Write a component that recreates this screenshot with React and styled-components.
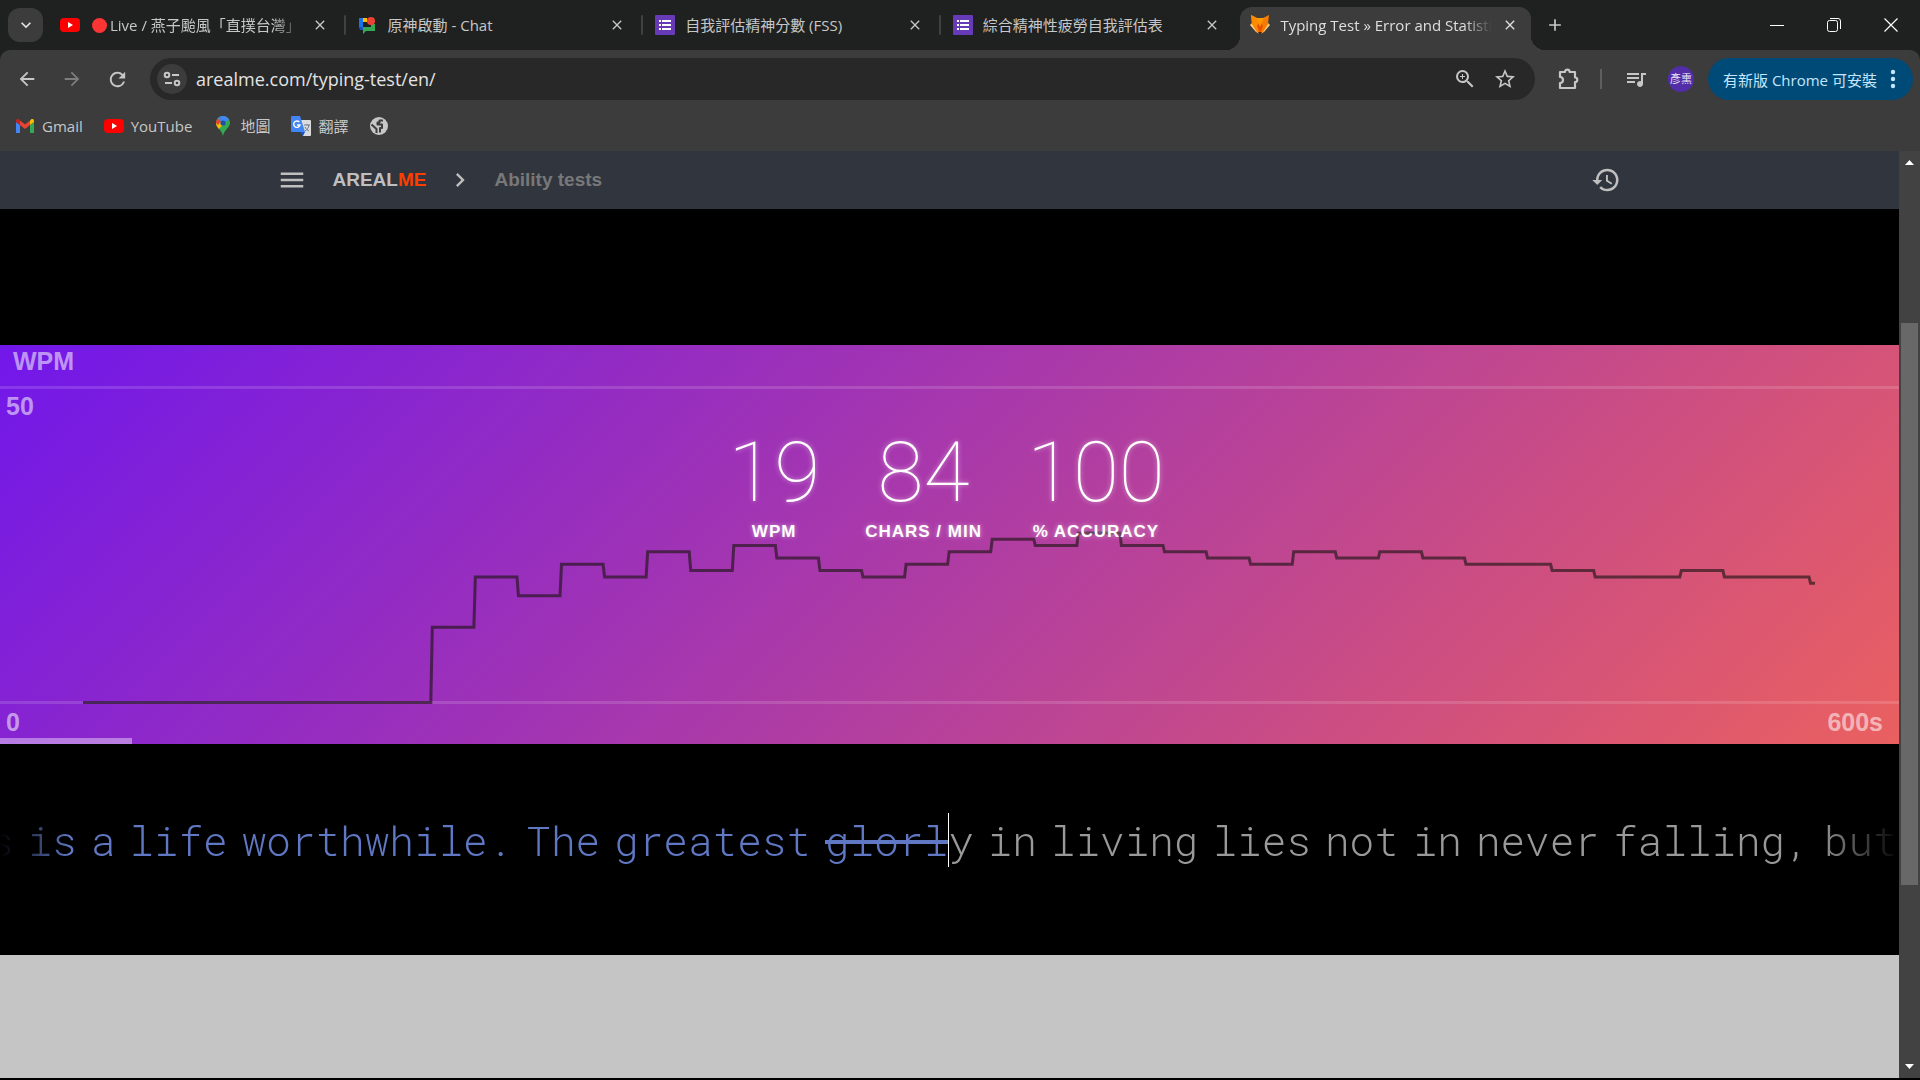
import React from 'react';
import styled, { createGlobalStyle, css } from 'styled-components';
import {
  MdArrowBack,
  MdArrowForward,
  MdRefresh,
  MdOutlineZoomIn,
  MdStarOutline,
  MdOutlineQueueMusic,
  MdHistory,
  MdMenu,
  MdChevronRight,
  MdKeyboardArrowDown,
  MdClose,
  MdAdd,
} from 'react-icons/md';

const UI_FONT = '"Open Sans", "Noto Sans CJK TC", sans-serif';
const SITE_FONT = '"Liberation Sans", Arial, sans-serif';

const GlobalStyle = createGlobalStyle`
  *, *::before, *::after { box-sizing: border-box; }
  body { margin: 0; background: #000; overflow: hidden; }
  button { padding: 0; border: 0; background: none; color: inherit; font: inherit; cursor: pointer; }
  a { color: inherit; text-decoration: none; }
  svg { display: block; flex: none; }
`;

const Window = styled.div`
  display: flex;
  flex-direction: column;
  height: 100vh;
  background: #000;
  font-family: ${UI_FONT};
  padding-bottom: 2px;
`;

/* ---------- Tab strip ---------- */

const TabStrip = styled.header`
  display: flex;
  align-items: center;
  height: 50px;
  flex: none;
  padding: 0 1px 0 8px;
  background: #1f2120;
  color: #c7c7c7;
`;

const TabSearch = styled.button`
  display: grid;
  place-items: center;
  width: 35px;
  height: 34px;
  margin-right: 5px;
  border-radius: 12px;
  background: #3c3c3c;
  color: #e3e3e3;
`;

const TabList = styled.div`
  display: flex;
  flex: 0 1 1488px;
  min-width: 0;
  height: 100%;
`;

const TabSlot = styled.div`
  display: flex;
  align-items: center;
  flex: 1 1 0;
  min-width: 0;
  gap: 3px;
  padding-left: 2px;
`;

const TabDivider = styled.span`
  width: 2px;
  height: 20px;
  border-radius: 1px;
  background: ${({ $hidden }) => ($hidden ? 'transparent' : '#3f4140')};
`;

const TabShape = styled.div`
  position: relative;
  display: flex;
  align-items: center;
  flex: 1;
  min-width: 0;
  align-self: stretch;
  margin-top: 7px;
  padding: 0 13px 7px 10px;
  ${({ $active }) =>
    $active &&
    css`
      background: #3c3c3c;
      color: #dfdfdf;
      border-radius: 12px 12px 0 0;
      &::before,
      &::after {
        content: '';
        position: absolute;
        bottom: 0;
        width: 14px;
        height: 14px;
      }
      &::before {
        right: 100%;
        background: radial-gradient(circle at 0 0, transparent 14px, #3c3c3c 14px);
      }
      &::after {
        left: 100%;
        background: radial-gradient(circle at 100% 0, transparent 14px, #3c3c3c 14px);
      }
    `}
`;

const TabTitle = styled.span`
  display: flex;
  align-items: center;
  gap: 3px;
  flex: 1;
  min-width: 0;
  margin: 0 10px;
  overflow: hidden;
  white-space: nowrap;
  font-size: 15px;
  line-height: 24px;
  font-family: ${({ $latin }) => ($latin ? '"Open Sans", sans-serif' : UI_FONT)};
  ${({ $fade }) => $fade && css`mask-image: linear-gradient(to right, #000 calc(100% - 28px), transparent);`}
`;

const LiveDot = styled.span`
  flex: none;
  width: 15px;
  height: 15px;
  margin-left: 2px;
  border-radius: 50%;
  background: #fb3434;
`;

const NewTab = styled.button`
  margin-left: 9px;
`;

const WindowControls = styled.div`
  display: flex;
  margin-left: auto;
  color: #fff;
`;

const WindowButton = styled.button`
  display: grid;
  place-items: center;
  width: 57px;
  height: 50px;
`;

/* ---------- Toolbar ---------- */

const ToolbarBack = styled.div`
  flex: none;
  background: #1f2120;
`;

const Toolbar = styled.div`
  display: flex;
  align-items: center;
  height: 58px;
  padding: 0 7px 0 15px;
  border-radius: 10px 10px 0 0;
  background: #3c3c3c;
  color: #c7c7c7;
`;

const NavButtons = styled.div`
  display: flex;
  gap: 21px;
  margin-right: 21px;
`;

const IconButton = styled.button`
  display: grid;
  place-items: center;
  width: 24px;
  height: 24px;
  color: ${({ $dim }) => ($dim ? '#7d7d7d' : 'inherit')};
`;

const AddressBar = styled.div`
  display: flex;
  align-items: center;
  flex: 1;
  height: 42px;
  padding: 0 18px 0 7px;
  border-radius: 21px;
  background: #282828;
  gap: 16px;
`;

const SiteInfo = styled.button`
  display: grid;
  place-items: center;
  width: 30px;
  height: 30px;
  margin-right: -7px;
  border-radius: 50%;
  background: #3c3c3c;
`;

const AddressInput = styled.input`
  flex: 1;
  min-width: 0;
  padding: 0;
  border: 0;
  outline: 0;
  background: none;
  color: #e3e3e3;
  font-family: ${UI_FONT};
  font-size: 18px;
`;

const Actions = styled.div`
  display: flex;
  align-items: center;
  margin-left: 21px;
`;

const ActionDivider = styled.span`
  width: 2px;
  height: 20px;
  margin: 0 22px 0 20px;
  background: #5f5f5f;
`;

const Avatar = styled.button`
  display: grid;
  place-items: center;
  width: 26px;
  height: 26px;
  margin: 0 14px 0 20px;
  border-radius: 50%;
  background: #512da8;
  color: #e8e4f4;
  font-size: 11px;
  line-height: 16px;
`;

const UpdateButton = styled.button`
  display: flex;
  align-items: center;
  justify-content: space-between;
  width: 205px;
  height: 42px;
  padding: 0 17px 0 15px;
  border-radius: 21px;
  background: #004a77;
  color: #c2e7ff;
  font-size: 15px;
  white-space: nowrap;
`;

const Bookmarks = styled.nav`
  display: flex;
  align-items: center;
  gap: 21px;
  height: 43px;
  padding: 0 15px 8px;
  background: #3c3c3c;
  color: #c7c7c7;
`;

const Bookmark = styled.a`
  display: flex;
  align-items: center;
  gap: 7px;
  font-size: 15px;
  line-height: 24px;
`;

/* ---------- Page ---------- */

const Viewport = styled.div`
  display: flex;
  flex: 1;
  min-height: 0;
`;

const Page = styled.main`
  display: flex;
  flex-direction: column;
  flex: 1;
  min-width: 0;
  background: #c5c5c5;
  font-family: ${SITE_FONT};
`;

const SiteNav = styled.nav`
  flex: none;
  padding: 0 26px 0 24px;
  background: #31353e;
`;

const SiteNavInner = styled.div`
  display: flex;
  align-items: center;
  max-width: 1344px;
  height: 58px;
  margin: 0 auto;
  color: #bfbfbf;
  font-size: 19px;
  font-weight: 700;
`;

const Brand = styled.a`
  margin: 0 20px 0 26px;
  em {
    font-style: normal;
    color: #ff3d00;
  }
`;

const Crumb = styled.a`
  margin-left: 20px;
  color: #787878;
`;

const HistoryButton = styled.button`
  margin-left: auto;
`;

const Stage = styled.section`
  flex: none;
  padding-top: 136px;
  background: #000;
`;

const ChartPanel = styled.div`
  position: relative;
  height: 399px;
  background: linear-gradient(135deg, #7117ea, #ea6060);
`;

const ChartSvg = styled.svg`
  width: 100%;
  height: 100%;
`;

const AxisLabel = styled.span`
  position: absolute;
  color: rgba(255, 255, 255, 0.55);
  font-size: 25px;
  line-height: 28px;
  font-weight: 700;
  ${({ $at }) =>
    ({
      title: 'left: 13px; top: 2px;',
      max: 'left: 6px; top: 47px;',
      min: 'left: 6px; bottom: 8px;',
      end: 'right: 16px; bottom: 8px;',
    })[$at]}
`;

const Progress = styled.div`
  position: absolute;
  left: 0;
  bottom: 0;
  height: 6px;
  background: rgba(255, 255, 255, 0.4);
`;

const Stats = styled.dl`
  position: absolute;
  inset: 0;
  display: flex;
  justify-content: center;
  gap: 45px;
  margin: 0;
  padding: 81px 6px 0 0;
  color: #fff;
  text-shadow: 0 0 5px rgba(255, 255, 255, 0.5);
`;

const Stat = styled.div`
  display: flex;
  flex-direction: column-reverse;
  justify-content: flex-end;
  align-items: center;
`;

const StatValue = styled.dd`
  margin: 0;
  font-family: Roboto, sans-serif;
  font-size: 84px;
  line-height: 94px;
  font-weight: 100;
`;

const StatLabel = styled.dt`
  font-size: 17px;
  line-height: 24px;
  font-weight: 700;
  letter-spacing: 1px;
`;

const TypingLine = styled.div`
  display: flex;
  align-items: center;
  height: 211px;
  padding: 0 2px 19px 0;
  font-family: "Roboto Mono", "Liberation Mono", monospace;
  font-size: 41px;
  font-weight: 300;
  line-height: 54px;
  white-space: nowrap;
  mask-image: linear-gradient(to right, transparent, #000 70px, #000 calc(100% - 80px), transparent);
`;

const Half = styled.div`
  display: flex;
  flex: 1 1 0;
  min-width: 0;
  gap: 14px;
  overflow: hidden;
  justify-content: ${({ $typed }) => ($typed ? 'flex-end' : 'flex-start')};
  color: ${({ $typed }) => ($typed ? '#6078c4' : '#999')};
`;

const Word = styled.span`
  flex: none;
  ${({ $wrong }) =>
    $wrong &&
    css`
      text-decoration: line-through;
      text-decoration-thickness: 4px;
    `}
`;

const Caret = styled.span`
  width: 1px;
  height: 54px;
  background: #fff;
`;

const Scrollbar = styled.div`
  display: flex;
  flex-direction: column;
  align-items: center;
  width: 21px;
  flex: none;
  background: #424242;
`;

const ScrollArrow = styled.button`
  display: grid;
  place-items: center;
  width: 21px;
  height: 23px;
  color: #fff;
`;

const ScrollTrack = styled.div`
  flex: 1;
  width: 17px;
`;

const ScrollThumb = styled.div`
  width: 17px;
  background: #686868;
`;

/* ---------- Icons ---------- */

const YouTubeIcon = () => (
  <svg width="20" height="20" viewBox="0 0 20 20">
    <rect y="3" width="20" height="14" rx="4" fill="#f00" />
    <path d="M8 7l5 3-5 3z" fill="#fff" />
  </svg>
);

const ChatIcon = () => (
  <svg width="20" height="20" viewBox="0 0 20 20">
    <path d="M1 3h4v10H1z" fill="#1a73e8" />
    <path d="M5 3h4v4H5z" fill="#fbbc04" />
    <path d="M1 12h4v3H2z" fill="#1558c0" />
    <path d="M5 12h8V9h4v7H8l-3 3z" fill="#34a853" />
    <circle cx="13" cy="6" r="4" fill="#ea4335" />
  </svg>
);

const FormsIcon = () => (
  <svg width="20" height="20" viewBox="0 0 20 20">
    <rect width="20" height="20" rx="1" fill="#673ab7" />
    <path d="M4 5h2v2H4zM7 5h9v2H7zM4 9h2v2H4zM7 9h9v2H7zM4 13h2v2H4zM7 13h9v2H7z" fill="#fff" />
  </svg>
);

const FoxIcon = () => (
  <svg width="20" height="20" viewBox="0 0 20 20">
    <path d="M0 10l4-4h12l4 4-6 7-4 2-4-2z" fill="#ffcc80" />
    <path d="M1 0l6 3h6l6-3-1 9-5 8-3 2-3-2-5-8z" fill="#f57c00" />
    <path d="M1 0l6 3 3 15-8-9z" fill="#fb8c00" />
    <path d="M10 6l3 5-3 8-3-8z" fill="#e65100" />
    <path d="M6 3h8l-4 9z" fill="#ff9800" />
    <path d="M8 17h4l-2 3z" fill="#3e2723" />
  </svg>
);

const GmailIcon = () => (
  <svg width="20" height="20" viewBox="0 0 20 20">
    <path d="M1 17V6l4 3v8z" fill="#4285f4" />
    <path d="M15 17V9l4-3v11z" fill="#34a853" />
    <path d="M1 5c0-2 2-2.500 3-1.500l1 1V9L1 6z" fill="#c5221f" />
    <path d="M5 4.500l5 4 5-4V9l-5 4-5-4z" fill="#ea4335" />
    <path d="M15 4.500l1-1c1-1 3-.5 3 1.500v1l-4 3z" fill="#fbbc04" />
  </svg>
);

const MapsIcon = () => (
  <svg width="20" height="20" viewBox="0 0 20 20">
    <path d="M10 0C6 0 3 3 3 7c0 4.500 6 7 7 13 1-6 7-8.500 7-13 0-4-3-7-7-7z" fill="#34a853" />
    <path d="M3 7c0 2.500 1.500 4.200 3 6l8.500-9.500L10 5z" fill="#fbbc04" />
    <path d="M10 0c2.500 0 4.700 1.300 6 3.500L10 8 5 2c1.300-1.300 3-2 5-2z" fill="#4285f4" />
    <path d="M4.700 2.400L8 5.500 5 9 3 7c0-1.800.6-3.300 1.700-4.600z" fill="#ea4335" />
    <circle cx="10" cy="7" r="2.600" fill="#1f4fa0" />
  </svg>
);

const TranslateIcon = () => (
  <svg width="20" height="20" viewBox="0 0 20 20">
    <path d="M8 4h11a1 1 0 0 1 1 1v14a1 1 0 0 1-1 1h-7z" fill="#dcdcdc" />
    <path d="M1 0h8l5 16H1a1 1 0 0 1-1-1V1a1 1 0 0 1 1-1z" fill="#4285f4" />
    <path d="M9 16h5l-2 4z" fill="#1a56c4" />
    <path d="M8.300 6A3.200 3.200 0 1 0 9 9H6" fill="none" stroke="#fff" strokeWidth="1.400" />
    <path d="M13 9h6M16 8v1M18 9c-.5 3-2 5-4 6M14 11c1 2 2 3 4 4" fill="none" stroke="#6b7a8f" />
  </svg>
);

const GlobeIcon = () => (
  <svg width="20" height="20" viewBox="0 0 20 20">
    <circle cx="10" cy="10" r="9" fill="#c7c7c7" />
    <path
      d="M14 4.500h-3.500v2H8.500v2h4.500v3.500h-2v4.500"
      fill="none"
      stroke="#3c3c3c"
      strokeWidth="2"
      strokeLinejoin="round"
    />
    <path d="M2.500 8.500l5 4.500v4" fill="none" stroke="#3c3c3c" strokeWidth="2" />
  </svg>
);

const PuzzleIcon = () => (
  <svg width="24" height="24" viewBox="0 0 24 24" fill="none" stroke="currentColor" strokeWidth="2.200">
    <path d="M4 5h5a2.300 2.300 0 0 1 4.600 0H19v5.500a2.300 2.300 0 0 1 0 4.600V21H4v-5a3 3 0 0 0 0-6z" strokeLinejoin="round" />
  </svg>
);

const TuneIcon = () => (
  <svg width="18" height="18" viewBox="0 0 18 18" fill="none" stroke="currentColor" strokeWidth="2">
    <circle cx="4" cy="5" r="2.300" />
    <path d="M9 5h7M2 13h7" />
    <circle cx="14" cy="13" r="2.300" />
  </svg>
);

/* ---------- Data ---------- */

const TABS = [
  { icon: YouTubeIcon, title: 'Live / 燕子颱風「直撲台灣」', live: true, fade: true },
  { icon: ChatIcon, title: '原神啟動 - Chat' },
  { icon: FormsIcon, title: '自我評估精神分數 (FSS)' },
  { icon: FormsIcon, title: '綜合精神性疲勞自我評估表' },
  { icon: FoxIcon, title: 'Typing Test » Error and Statistics', active: true, fade: true, latin: true },
];

const BOOKMARKS = [
  { icon: GmailIcon, title: 'Gmail' },
  { icon: YouTubeIcon, title: 'YouTube' },
  { icon: MapsIcon, title: '地圖' },
  { icon: TranslateIcon, title: '翻譯' },
  { icon: GlobeIcon, title: '' },
];

const STATS = [
  ['WPM', '19'],
  ['CHARS / MIN', '84'],
  ['% ACCURACY', '100'],
];

const TYPED = ['others', 'is', 'a', 'life', 'worthwhile.', 'The', 'greatest'];
const UPCOMING = ['y', 'in', 'living', 'lies', 'not', 'in', 'never', 'falling,', 'but'];

const WPM = [
  12, 20, 17, 22, 20, 24, 21, 25, 23, 21, 20, 22, 24, 26, 25, 27, 25, 24, 23, 22, 24, 23, 24, 23, 22, 22, 21, 20,
  20, 21, 20, 20, 19,
];

const BASE_Y = 357.5;
const yOf = (v) => BASE_Y - v * 6.28;

function wpmPath() {
  let prev = 0;
  let d = `M83 ${BASE_Y}`;
  WPM.forEach((v, i) => {
    const x = 431.3 + i * 43.07;
    d += `L${x - 0.5} ${yOf(prev)}L${x + 1} ${yOf(v)}`;
    prev = v;
  });
  return `${d}L1815 ${yOf(prev)}`;
}

export default function App() {
  return (
    <Window>
      <GlobalStyle />
      <TabStrip>
        <TabSearch aria-label="Search tabs">
          <MdKeyboardArrowDown size={20} />
        </TabSearch>
        <TabList>
          {TABS.map(({ icon: Icon, title, live, fade, active, latin }, i) => (
            <TabSlot key={title}>
              <TabShape $active={active}>
                <Icon />
                <TabTitle $fade={fade} $latin={latin}>
                  {live && <LiveDot />}
                  {title}
                </TabTitle>
                <button aria-label="Close tab">
                  <MdClose size={16} />
                </button>
              </TabShape>
              <TabDivider $hidden={i > 2} />
            </TabSlot>
          ))}
        </TabList>
        <NewTab aria-label="New tab">
          <MdAdd size={20} />
        </NewTab>
        <WindowControls>
          <WindowButton aria-label="Minimize">
            <svg width="14" height="14" viewBox="0 0 14 14" stroke="currentColor">
              <path d="M0 7.500h14" />
            </svg>
          </WindowButton>
          <WindowButton aria-label="Restore">
            <svg width="14" height="14" viewBox="0 0 14 14" fill="none" stroke="currentColor">
              <rect x=".5" y="2.500" width="10" height="11" rx="2" />
              <path d="M3 .5h8a2.500 2.500 0 0 1 2.500 2.500v8" />
            </svg>
          </WindowButton>
          <WindowButton aria-label="Close">
            <svg width="14" height="14" viewBox="0 0 14 14" stroke="currentColor" strokeWidth="1.200">
              <path d="M.5 .5l13 13M13.500 .5l-13 13" />
            </svg>
          </WindowButton>
        </WindowControls>
      </TabStrip>

      <ToolbarBack>
        <Toolbar>
          <NavButtons>
            <IconButton aria-label="Back">
              <MdArrowBack size={22} />
            </IconButton>
            <IconButton aria-label="Forward" $dim>
              <MdArrowForward size={22} />
            </IconButton>
            <IconButton aria-label="Reload">
              <MdRefresh size={23} />
            </IconButton>
          </NavButtons>
          <AddressBar>
            <SiteInfo aria-label="Site information">
              <TuneIcon />
            </SiteInfo>
            <AddressInput aria-label="Address" defaultValue="arealme.com/typing-test/en/" />
            <IconButton aria-label="Zoom">
              <MdOutlineZoomIn size={24} />
            </IconButton>
            <IconButton aria-label="Bookmark this page">
              <MdStarOutline size={24} />
            </IconButton>
          </AddressBar>
          <Actions>
            <IconButton aria-label="Extensions">
              <PuzzleIcon />
            </IconButton>
            <ActionDivider />
            <IconButton aria-label="Media">
              <MdOutlineQueueMusic size={24} />
            </IconButton>
            <Avatar aria-label="Profile">彥熏</Avatar>
            <UpdateButton>
              有新版 Chrome 可安裝
              <svg width="6" height="20" viewBox="0 0 6 20" fill="currentColor">
                <circle cx="3" cy="3" r="2.200" />
                <circle cx="3" cy="10" r="2.200" />
                <circle cx="3" cy="17" r="2.200" />
              </svg>
            </UpdateButton>
          </Actions>
        </Toolbar>
        <Bookmarks>
          {BOOKMARKS.map(({ icon: Icon, title }) => (
            <Bookmark key={title} href="#" aria-label={title || 'Website'}>
              <Icon />
              {title}
            </Bookmark>
          ))}
        </Bookmarks>
      </ToolbarBack>

      <Viewport>
        <Page>
          <SiteNav>
            <SiteNavInner>
              <button aria-label="Menu">
                <MdMenu size={30} />
              </button>
              <Brand href="#">
                AREAL<em>ME</em>
              </Brand>
              <MdChevronRight size={28} />
              <Crumb href="#">Ability tests</Crumb>
              <HistoryButton aria-label="History">
                <MdHistory size={30} />
              </HistoryButton>
            </SiteNavInner>
          </SiteNav>
          <Stage>
            <ChartPanel>
              <ChartSvg viewBox="0 0 1899 399" preserveAspectRatio="none">
                <path d="M0 42.500H1899M0 357.500H1899" stroke="#fff" strokeOpacity=".14" strokeWidth="3" />
                <path d={wpmPath()} fill="none" stroke="#1e1414" strokeOpacity=".64" strokeWidth="3" />
              </ChartSvg>
              <AxisLabel $at="title">WPM</AxisLabel>
              <AxisLabel $at="max">50</AxisLabel>
              <AxisLabel $at="min">0</AxisLabel>
              <AxisLabel $at="end">600s</AxisLabel>
              <Stats>
                {STATS.map(([label, value]) => (
                  <Stat key={label}>
                    <StatLabel>{label}</StatLabel>
                    <StatValue>{value}</StatValue>
                  </Stat>
                ))}
              </Stats>
              <Progress style={{ width: `${(41.7 / 600) * 100}%` }} />
            </ChartPanel>
            <TypingLine>
              <Half $typed>
                {TYPED.map((w, i) => (
                  <Word key={i}>{w}</Word>
                ))}
                <Word $wrong>glorl</Word>
              </Half>
              <Caret />
              <Half>
                {UPCOMING.map((w, i) => (
                  <Word key={i}>{w}</Word>
                ))}
              </Half>
            </TypingLine>
          </Stage>
        </Page>
        <Scrollbar>
          <ScrollArrow aria-label="Scroll up">
            <svg width="9" height="5" viewBox="0 0 9 5" fill="currentColor">
              <path d="M4.500 0L9 5H0z" />
            </svg>
          </ScrollArrow>
          <ScrollTrack>
            <ScrollThumb style={{ height: '63.800%', marginTop: '149px' }} />
          </ScrollTrack>
          <ScrollArrow aria-label="Scroll down">
            <svg width="9" height="5" viewBox="0 0 9 5" fill="currentColor">
              <path d="M0 0h9L4.500 5z" />
            </svg>
          </ScrollArrow>
        </Scrollbar>
      </Viewport>
    </Window>
  );
}
